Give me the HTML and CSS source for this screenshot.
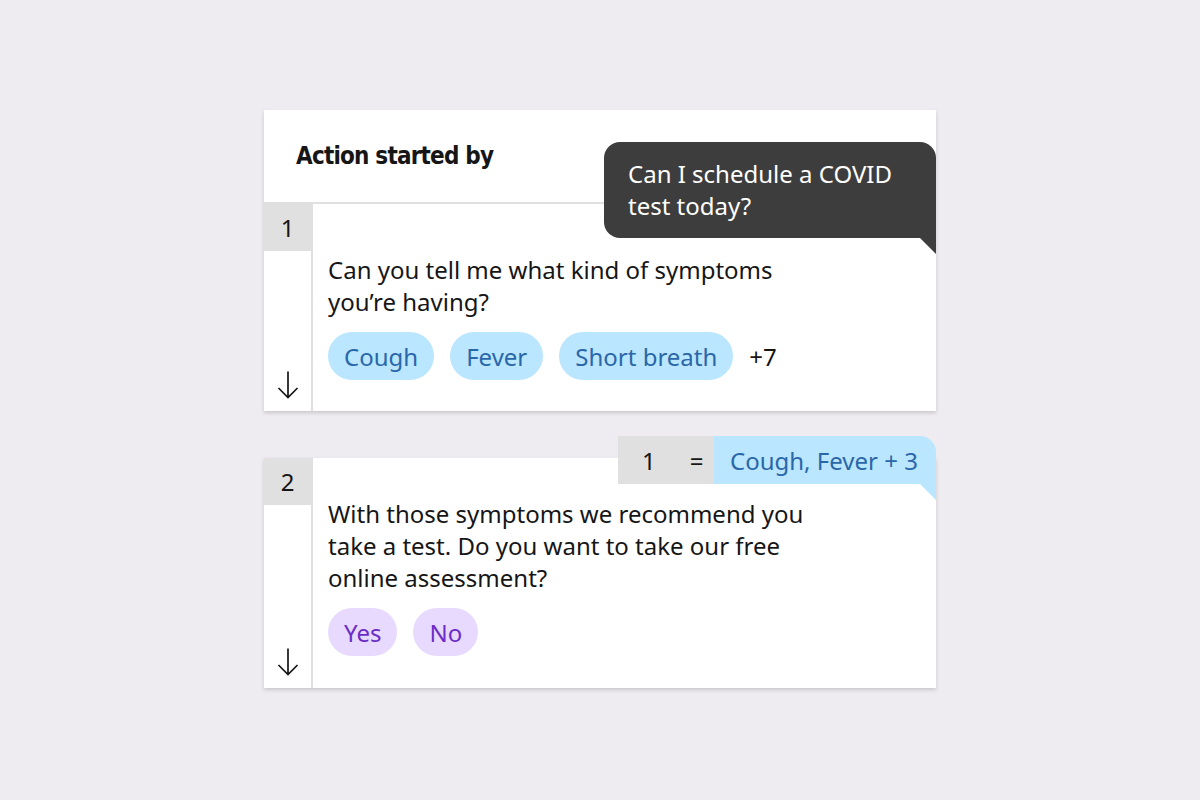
FILE: index.html
```html
<!DOCTYPE html>
<html lang="en">
<head>
<meta charset="utf-8">
<title>Action flow</title>
<link rel="stylesheet" href="styles.css">
</head>
<body>
<main class="stage">
  <section class="card">
    <header class="card-head">
      <h2 class="title">Action started by</h2>
      <div class="tooltip">Can I schedule a COVID<br>test today?</div>
    </header>
    <div class="row row-first">
      <div class="gutter">
        <div class="num">1</div>
        <svg class="arrow" width="22" height="28" viewBox="0 0 22 28" aria-hidden="true"><path d="M11 0.5 V26.5 M1.5 17 L11 26.5 L20.5 17" fill="none" stroke="#161616" stroke-width="1.7"/></svg>
      </div>
      <div class="content">
        <p class="msg">Can you tell me what kind of symptoms<br>you’re having?</p>
        <div class="chips">
          <span class="chip chip-cyan">Cough</span>
          <span class="chip chip-cyan">Fever</span>
          <span class="chip chip-cyan">Short breath</span>
          <span class="more">+7</span>
        </div>
      </div>
    </div>
  </section>

  <section class="card card-second">
    <div class="cond">
      <span class="cond-key"><span>1</span><span>=</span></span>
      <span class="cond-val">Cough, Fever + 3</span>
    </div>
    <div class="row row-second">
      <div class="gutter">
        <div class="num">2</div>
        <svg class="arrow" width="22" height="28" viewBox="0 0 22 28" aria-hidden="true"><path d="M11 0.5 V26.5 M1.5 17 L11 26.5 L20.5 17" fill="none" stroke="#161616" stroke-width="1.7"/></svg>
      </div>
      <div class="content">
        <p class="msg">With those symptoms we recommend you<br>take a test. Do you want to take our free<br>online assessment?</p>
        <div class="chips">
          <span class="chip chip-purple">Yes</span>
          <span class="chip chip-purple">No</span>
        </div>
      </div>
    </div>
  </section>
</main>
</body>
</html>
```

FILE: styles.css
```css
html, body {
  margin: 0;
  padding: 0;
}
body {
  background: #eeecf0;
  font-family: "Noto Sans", "Open Sans", sans-serif;
  color: #161616;
  width: 1200px;
  height: 800px;
  overflow: hidden;
}
.stage {
  width: 672px;
  margin: 0 auto;
  padding-top: 110px;
}
.card {
  position: relative;
  background: #ffffff;
  box-shadow: 0 2px 4px rgba(0, 0, 0, 0.16);
}
.card-second {
  margin-top: 47px;
}
.card-head {
  position: relative;
  height: 92px;
  padding-left: 32px;
  display: flex;
  align-items: center;
  border-bottom: 2px solid #e0e0e0;
}
.title {
  margin: 0;
  font-family: "DejaVu Sans Condensed", "Liberation Sans", sans-serif;
  font-weight: bold;
  font-size: 24px;
  letter-spacing: -0.8px;
  color: #161616;
}
.tooltip {
  position: absolute;
  right: 0;
  top: 32px;
  width: 332px;
  height: 96px;
  box-sizing: border-box;
  padding: 16px 24px;
  background: #3d3d3d;
  color: #ffffff;
  font-size: 24px;
  line-height: 32px;
  border-radius: 16px 16px 0 16px;
  z-index: 2;
}
.tooltip::after {
  content: "";
  position: absolute;
  right: 0;
  bottom: -16px;
  border-top: 16px solid #3d3d3d;
  border-left: 16px solid transparent;
}
.row {
  display: flex;
}
.gutter {
  width: 47px;
  border-right: 2px solid #e0e0e0;
  display: flex;
  flex-direction: column;
  align-items: center;
  justify-content: space-between;
  padding-bottom: 12px;
}
.num {
  width: 47px;
  height: 47px;
  background: #e0e0e0;
  display: flex;
  align-items: center;
  justify-content: center;
  font-size: 24px;
}
.arrow {
  display: block;
}
.content {
  padding-left: 15px;
  flex: 1;
}
.row-first .content {
  padding-top: 50px;
  padding-bottom: 31px;
}
.row-second .content {
  padding-top: 40px;
  padding-bottom: 32px;
}
.msg {
  margin: 0;
  font-size: 24px;
  line-height: 32px;
  color: #161616;
}
.chips {
  display: flex;
  align-items: center;
  gap: 16px;
  margin-top: 14px;
}
.chip {
  height: 48px;
  box-sizing: border-box;
  padding: 0 16px;
  border-radius: 24px;
  display: inline-flex;
  align-items: center;
  font-size: 24px;
}
.chip-cyan {
  background: #bae6ff;
  color: #2a67a9;
}
.chip-purple {
  background: #e8daff;
  color: #6c2cc6;
}
.more {
  font-size: 24px;
  color: #161616;
}
.cond {
  position: absolute;
  right: 0;
  top: -22px;
  height: 48px;
  display: flex;
  font-size: 24px;
  z-index: 2;
}
.cond-key {
  width: 96px;
  box-sizing: border-box;
  padding-left: 24px;
  background: #e0e0e0;
  display: flex;
  align-items: center;
  gap: 34px;
  color: #161616;
}
.cond-val {
  position: relative;
  width: 222px;
  box-sizing: border-box;
  padding-left: 16px;
  background: #bae6ff;
  color: #2a67a9;
  display: flex;
  align-items: center;
  border-radius: 0 16px 0 0;
}
.cond-val::after {
  content: "";
  position: absolute;
  right: 0;
  bottom: -16px;
  border-top: 16px solid #bae6ff;
  border-left: 16px solid transparent;
}
```
